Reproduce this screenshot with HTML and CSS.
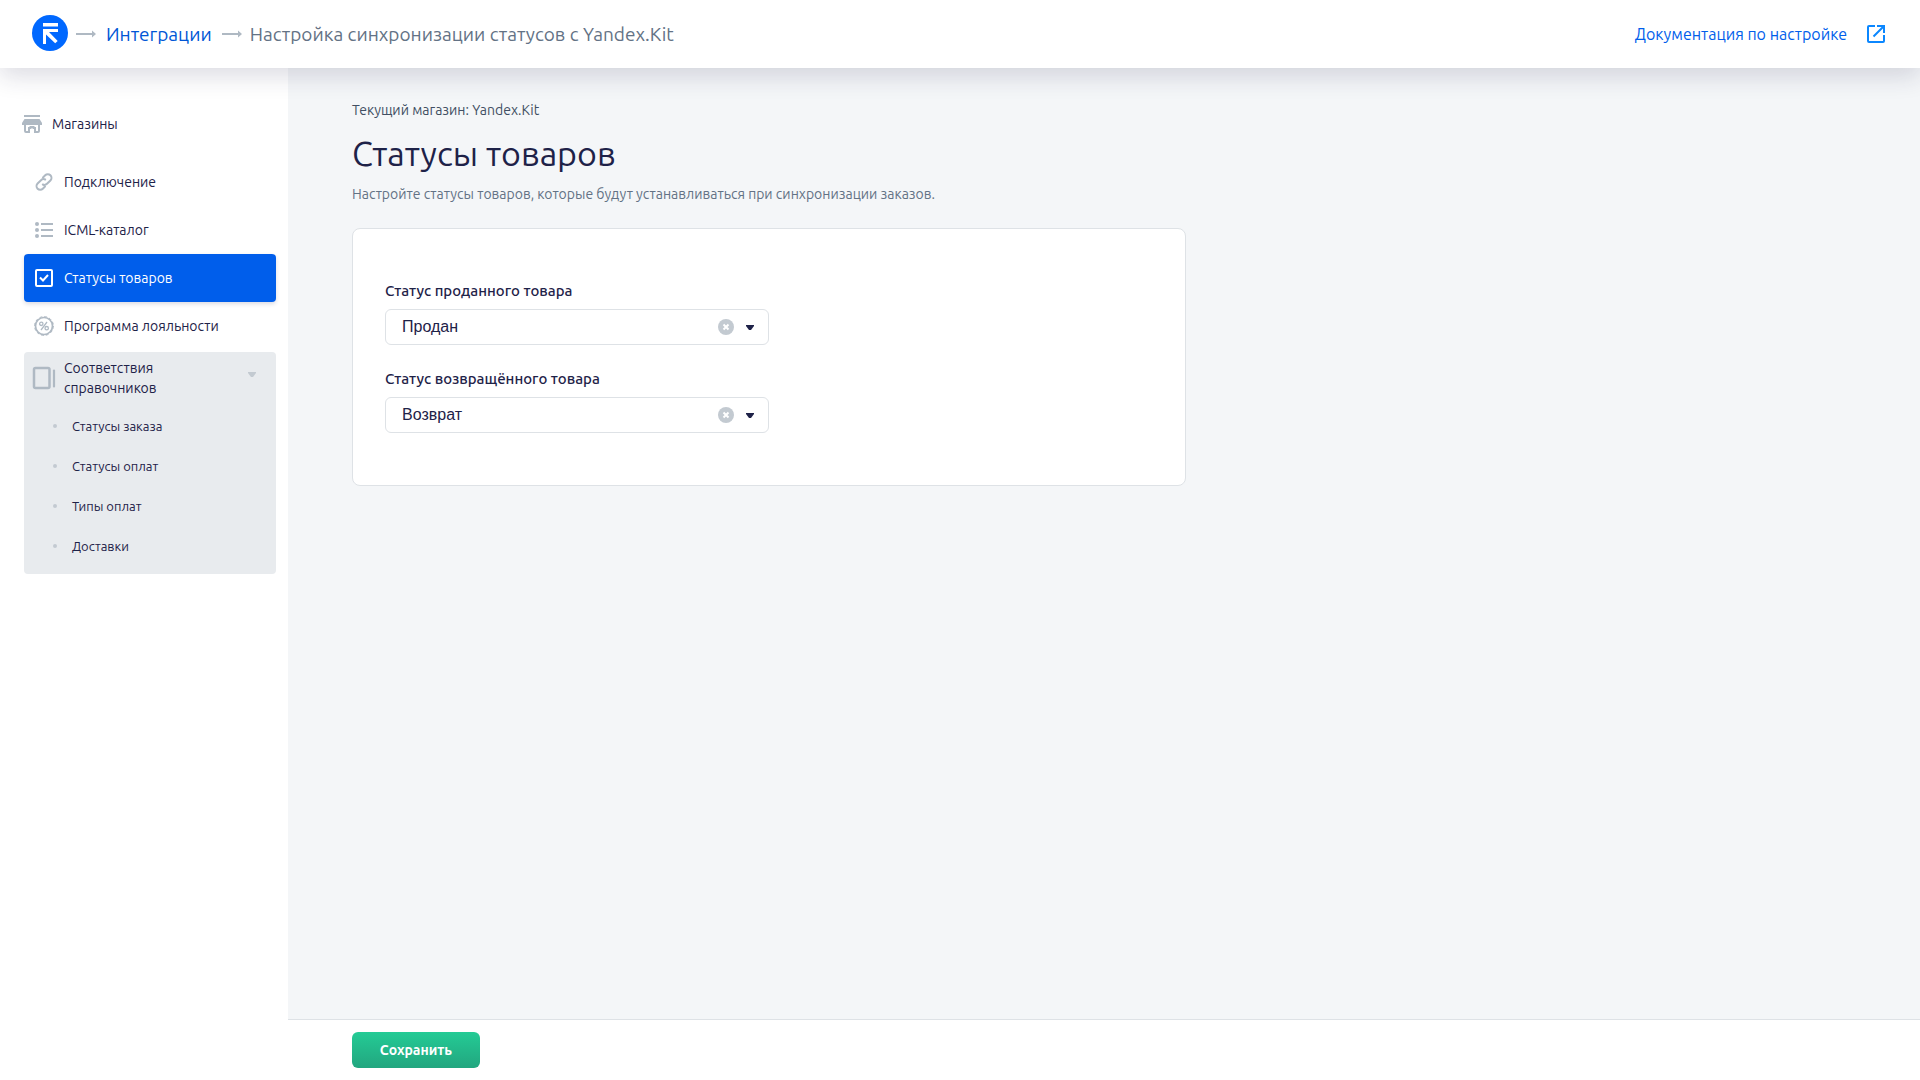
FILE: index.html
```html
<!DOCTYPE html>
<html lang="ru">
<head>
   <meta charset="UTF-8">
   <meta name="viewport" content="width=device-width, initial-scale=1.0">
   <title>Статусы товаров</title>
   <link rel="stylesheet" href="styles.css">
</head>
<body>
   <header class="header">
      <nav class="breadcrumbs">
         <a class="logo" href="#" aria-label="Главная">
            <svg width="36" height="36" viewBox="0 0 36 36">
               <circle cx="18" cy="18" r="18" fill="#0068ff"/>
               <path fill="#fff" d="M11 8h15v3.500H11zM11 14h15v3H17l8.700 9-2.500 2.200L14 19.500V29h-3z"/>
            </svg>
         </a>
         <svg class="arrow" width="20" height="8" viewBox="0 0 20 8"><path fill="#afb9c3" d="M0 3h16V0.500L20 4l-4 3.500V5H0z"/></svg>
         <a class="crumb-link" href="#">Интеграции</a>
         <svg class="arrow" width="20" height="8" viewBox="0 0 20 8"><path fill="#afb9c3" d="M0 3h16V0.500L20 4l-4 3.500V5H0z"/></svg>
         <span class="crumb-current">Настройка синхронизации статусов с Yandex.Kit</span>
      </nav>
      <a class="docs-link" href="#">
         Документация по настройке
         <svg width="18" height="18" viewBox="0 0 18 18" fill="none" stroke="#0b87ff" stroke-width="2">
            <path d="M8 1H2a1 1 0 0 0-1 1v14a1 1 0 0 0 1 1h14a1 1 0 0 0 1-1v-6M10 1h7v7M16.500 1.500L6.500 11.500"/>
         </svg>
      </a>
   </header>

   <div class="layout">
      <aside class="sidebar">
         <a class="menu-top" href="#">
            <svg width="20" height="18" viewBox="0 0 20 18" fill="#afb9c3">
               <path d="M2 0h16v2H2zM2.500 4h15L20 8v2H0V8z"/>
               <path d="M3 9v7a1 1 0 0 0 1 1h3v-4h1.500v-1h3v1H13v4h3a1 1 0 0 0 1-1V9" fill="none" stroke="#afb9c3" stroke-width="2"/>
            </svg>
            Магазины
         </a>
         <nav class="menu">
            <a class="menu-item" href="#">
               <svg class="menu-icon" viewBox="0 0 18 18" fill="none" stroke="#afb9c3" stroke-width="2" stroke-linecap="round">
                  <path d="M8 4.500l2.200-2.200a3.600 3.600 0 0 1 5.200 0 3.700 3.700 0 0 1 0 5.200l-3.400 3.300a3.700 3.700 0 0 1-4.200.7"/>
                  <path d="M10 13.500l-2.200 2.200a3.600 3.600 0 0 1-5.200 0 3.700 3.700 0 0 1 0-5.200l3.400-3.300a3.700 3.700 0 0 1 4.200-.7"/>
               </svg>
               Подключение
            </a>
            <a class="menu-item" href="#">
               <svg class="menu-icon" viewBox="0 0 18 18" fill="#afb9c3">
                  <path d="M6 2h12v2H6zM6 8h12v2H6zM6 14h12v2H6z"/>
                  <circle cx="2" cy="3" r="2"/><circle cx="2" cy="9" r="2"/><circle cx="2" cy="15" r="2"/>
               </svg>
               ICML-каталог
            </a>
            <a class="menu-item active" href="#">
               <svg class="menu-icon" viewBox="0 0 18 18" fill="none" stroke="#fff" stroke-width="2">
                  <rect x="1" y="1" width="16" height="16" rx="1"/>
                  <path d="M5 8.500l3 3 5-5.500"/>
               </svg>
               Статусы товаров
            </a>
            <a class="menu-item" href="#">
               <svg class="menu-icon" viewBox="0 0 18 18" fill="none" stroke="#afb9c3">
                  <circle cx="9" cy="9" r="8.500" stroke-width="1.700"/>
                  <circle cx="9" cy="9" r="9.400" stroke-width="1" stroke-dasharray="2.900 2.022"/>
                  <path d="M12 5L6 13" stroke-width="1.300"/>
                  <circle cx="6.300" cy="6.800" r="1.700" stroke-width="1.300"/><circle cx="11.700" cy="11.200" r="1.700" stroke-width="1.300"/>
               </svg>
               Программа лояльности
            </a>
            <div class="menu-group">
               <a class="group-title" href="#">
                  <svg width="24" height="24" viewBox="0 0 24 24" fill="none" stroke="#afb9c3">
                     <rect x="2" y="2" width="15.500" height="20" rx="1.500" stroke-width="2.500"/>
                     <path d="M22 4.500v16" stroke-width="2.200" stroke-linecap="round"/>
                  </svg>
                  <span>Соответствия справочников</span>
                  <svg class="group-caret" width="8" height="5" viewBox="0 0 8 5"><path fill="#c3cad1" d="M0 0h8v1L5 5H3L0 1z"/></svg>
               </a>
               <ul class="submenu">
                  <li><a href="#">Статусы заказа</a></li>
                  <li><a href="#">Статусы оплат</a></li>
                  <li><a href="#">Типы оплат</a></li>
                  <li><a href="#">Доставки</a></li>
               </ul>
            </div>
         </nav>
      </aside>

      <form class="main">
         <main class="content">
            <p class="shop">Текущий магазин: Yandex.Kit</p>
            <h1>Статусы товаров</h1>
            <p class="description">Настройте статусы товаров, которые будут устанавливаться при синхронизации заказов.</p>

            <section class="card">
               <div class="field">
                  <label for="sold">Статус проданного товара</label>
                  <div class="select">
                     <select id="sold">
                        <option>Продан</option>
                     </select>
                     <button class="clear" type="button" aria-label="Очистить">
                        <svg width="16" height="16" viewBox="0 0 16 16"><circle cx="8" cy="8" r="8" fill="#c3cad1"/><path stroke="#fff" stroke-width="2" d="M5.500 5.500l5 5M10.500 5.500l-5 5"/></svg>
                     </button>
                     <svg class="caret" width="8" height="5" viewBox="0 0 8 5"><path fill="#1e2248" d="M0 0h8v1L5 5H3L0 1z"/></svg>
                  </div>
               </div>
               <div class="field">
                  <label for="returned">Статус возвращённого товара</label>
                  <div class="select">
                     <select id="returned">
                        <option>Возврат</option>
                     </select>
                     <button class="clear" type="button" aria-label="Очистить">
                        <svg width="16" height="16" viewBox="0 0 16 16"><circle cx="8" cy="8" r="8" fill="#c3cad1"/><path stroke="#fff" stroke-width="2" d="M5.500 5.500l5 5M10.500 5.500l-5 5"/></svg>
                     </button>
                     <svg class="caret" width="8" height="5" viewBox="0 0 8 5"><path fill="#1e2248" d="M0 0h8v1L5 5H3L0 1z"/></svg>
                  </div>
               </div>
            </section>
         </main>
         <footer class="footer">
            <button class="save" type="submit">Сохранить</button>
         </footer>
      </form>
   </div>
</body>
</html>
```
FILE: styles.css
```css
* {
   box-sizing: border-box;
}
body {
   margin: 0;
   min-height: 100vh;
   display: flex;
   flex-direction: column;
   font-family: Ubuntu, "Noto Sans", sans-serif;
   font-size: 14px;
   line-height: 20px;
   color: #1e2248;
   background: #fff;
}
a {
   color: inherit;
   text-decoration: none;
}
svg {
   display: block;
   flex-shrink: 0;
}
.header {
   position: relative;
   z-index: 1;
   height: 68px;
   padding: 0 35px 0 32px;
   display: flex;
   justify-content: space-between;
   align-items: center;
   background: #fff;
   box-shadow: 0 8px 24px rgba(30, 34, 72, 0.16);
}
.breadcrumbs {
   display: flex;
   align-items: center;
   font-size: 19px;
   line-height: 24px;
}
.logo {
   margin-right: 8px;
   padding-bottom: 2px;
}
.crumb-link {
   margin: 0 10px;
   color: #0056d6;
}
.crumb-current {
   margin-left: 8px;
   color: #637285;
}
.docs-link {
   display: flex;
   align-items: center;
   gap: 20px;
   font-size: 16px;
   color: #005eeb;
}
.layout {
   flex: 1;
   display: flex;
}
.sidebar {
   width: 288px;
   padding: 42px 12px 24px 22px;
   flex-shrink: 0;
}
.menu-top {
   display: flex;
   align-items: center;
   gap: 10px;
   height: 28px;
}
.menu {
   padding: 20px 0 0 2px;
}
.menu-item {
   display: flex;
   align-items: center;
   gap: 11px;
   height: 48px;
   padding: 0 11px;
   border-radius: 4px;
}
.menu-item.active {
   color: #fff;
   background: #005eeb;
   box-shadow: 0 2px 4px rgba(30, 34, 72, 0.16);
}
.menu-icon {
   width: 18px;
   height: 18px;
   overflow: visible;
}
.menu-group {
   margin-top: 2px;
   padding-bottom: 8px;
   border-radius: 4px;
   background: #e8ebee;
}
.group-title {
   display: flex;
   align-items: center;
   gap: 8px;
   padding: 6px 20px 8px 8px;
}
.group-title span {
   flex: 1;
   padding-right: 60px;
}
.group-caret {
   align-self: flex-start;
   margin-top: 14px;
}
.submenu {
   margin: 0;
   padding: 0;
   list-style: none;
   font-size: 13px;
}
.submenu a {
   display: flex;
   align-items: center;
   gap: 15px;
   height: 40px;
   padding-left: 29px;
}
.submenu a::before {
   content: "";
   width: 4px;
   height: 4px;
   border-radius: 50%;
   background: #c3cad1;
}
.main {
   flex: 1;
   display: flex;
   flex-direction: column;
   background: #f4f6f8;
}
.content {
   flex: 1;
   padding: 32px 64px;
}
.shop {
   margin: 0 0 12px;
   color: #414f63;
}
h1 {
   margin: 0 0 10px;
   font-size: 34px;
   line-height: 42px;
   font-weight: 400;
}
.description {
   margin: 0 0 24px;
   color: #637285;
}
.card {
   max-width: 834px;
   padding: 52px 32px;
   display: flex;
   flex-direction: column;
   gap: 24px;
   border: 1px solid #dee2e6;
   border-radius: 8px;
   background: #fff;
}
.field {
   display: flex;
   flex-direction: column;
   gap: 8px;
}
.field label {
   font-weight: 500;
   font-size: 15px;
}
.select {
   position: relative;
   max-width: 384px;
}
.select select {
   appearance: none;
   display: block;
   width: 100%;
   height: 36px;
   padding: 0 60px 2px 16px;
   border: 1px solid #dee2e6;
   border-radius: 6px;
   background: #fff;
   font-family: "Liberation Sans", Arial, sans-serif;
   font-size: 16px;
   color: #1e2248;
}
/* clear and caret lie over the select */
.clear {
   position: absolute;
   top: 10px;
   right: 35px;
   padding: 0;
   border: 0;
   background: none;
   cursor: pointer;
}
.caret {
   position: absolute;
   top: 16px;
   right: 15px;
   pointer-events: none;
}
.footer {
   padding: 12px 64px;
   border-top: 1px solid #dee2e6;
   background: #fff;
}
.save {
   display: block;
   width: 128px;
   height: 36px;
   border: 0;
   border-radius: 6px;
   background: linear-gradient(#24cb95, #22a67f);
   color: #fff;
   font-family: inherit;
   font-size: 14px;
   font-weight: 600;
   cursor: pointer;
}
```
